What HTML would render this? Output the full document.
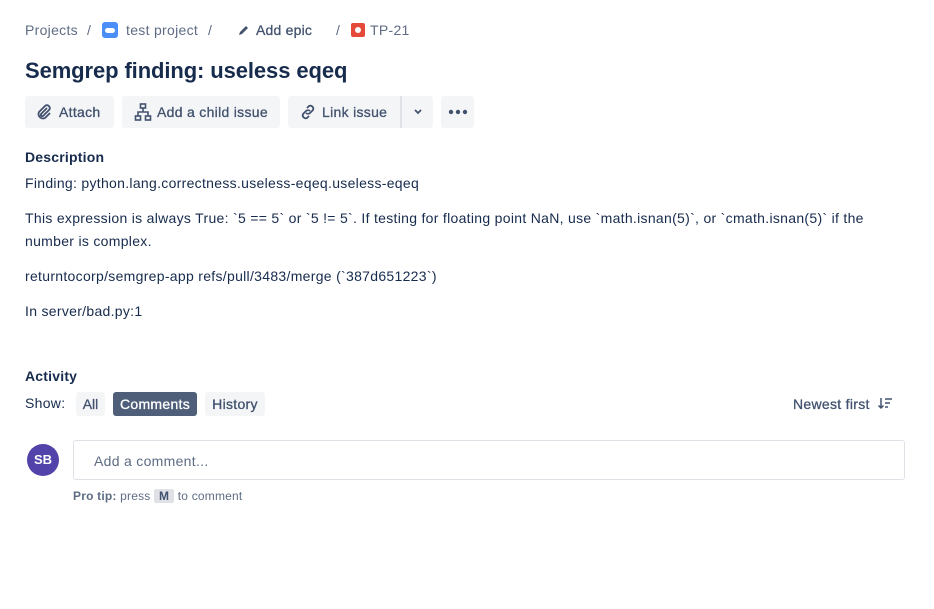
<!DOCTYPE html><html><head><meta charset="utf-8"><style>
body{margin:0;background:#fff;font-family:"Liberation Sans",sans-serif;color:#172b4d;width:934px;height:609px;overflow:hidden;position:relative}
.a{position:absolute;white-space:nowrap}
.bc{top:22px;font-size:14px;color:#5e6c84;letter-spacing:0.3px}
.btn{position:absolute;top:96px;height:32px;background:#f4f5f7;border-radius:3px;font-size:14px;color:#42526e;display:flex;align-items:center;box-sizing:border-box;letter-spacing:0.3px;-webkit-text-stroke:0.3px #42526e}
.p{font-size:14px;color:#172b4d;letter-spacing:0.3px}
</style></head><body>
<div class="a bc" style="left:25px">Projects</div>
<div class="a bc" style="left:87px">/</div>
<div class="a" style="left:102px;top:22px;width:16px;height:16px;background:#4c8ef7;border-radius:3px"><div style="position:absolute;left:3px;top:6px;width:10px;height:5px;background:#fff;border-radius:3px"></div></div>
<div class="a bc" style="left:126px">test project</div>
<div class="a bc" style="left:208px">/</div>
<svg class="a" style="left:238px;top:24px" width="12" height="12" viewBox="0 0 12 12"><path d="M1 11l1-3 6-6 2 2-6 6z" fill="#42526e"/></svg>
<div class="a bc" style="left:256px;color:#42526e;-webkit-text-stroke:0.3px #42526e;letter-spacing:0.2px">Add epic</div>
<div class="a bc" style="left:336px">/</div>
<div class="a" style="left:351px;top:23px;width:14px;height:14px;background:#e5493a;border-radius:2px"><div style="position:absolute;left:4px;top:4px;width:6px;height:6px;background:#fff;border-radius:50%"></div></div>
<div class="a bc" style="left:370px">TP-21</div>
<div class="a" style="left:25px;top:58px;font-size:22px;font-weight:bold;color:#172b4d;letter-spacing:-0.1px">Semgrep finding: useless eqeq</div>
<div class="btn" style="left:25px;width:89px;padding-left:9px"><svg width="20" height="20" viewBox="0 0 20 20" style="margin-right:5px"><path d="M13 6l-6 6a1.5 1.5 0 002 2l6.5-6.5a3 3 0 00-4-4L5 10a4.5 4.5 0 006 6l5-5" stroke="#42526e" stroke-width="1.8" fill="none"/></svg>Attach</div>
<div class="btn" style="left:122px;width:158px;padding-left:11px"><svg width="20" height="20" viewBox="0 0 20 20" style="margin-right:4px"><g stroke="#42526e" stroke-width="1.6" fill="none"><rect x="7.5" y="2" width="5" height="4"/><rect x="2.5" y="14" width="5" height="4"/><rect x="12.5" y="14" width="5" height="4"/><path d="M10 6v4M5 14v-4h10v4"/></g></svg>Add a child issue</div>
<div class="btn" style="left:288px;width:145px;padding-left:10px"><svg width="20" height="20" viewBox="0 0 20 20" style="margin-right:4px"><g stroke="#42526e" stroke-width="1.8" fill="none"><path d="M9 6l2-2a3 3 0 014 4l-3 3a3 3 0 01-4 0"/><path d="M11 14l-2 2a3 3 0 01-4-4l3-3a3 3 0 014 0"/></g></svg>Link issue<div style="position:absolute;left:112px;top:0;width:2px;height:32px;background:#dfe1e6"></div><svg style="position:absolute;left:125px;top:12px" width="10" height="8" viewBox="0 0 10 8"><path d="M2 2l3 3 3-3" stroke="#42526e" stroke-width="1.8" fill="none"/></svg></div>
<div class="btn" style="left:441px;width:33px;justify-content:center"><svg width="20" height="6" viewBox="0 0 20 6"><circle cx="3" cy="3" r="2.2" fill="#42526e"/><circle cx="10" cy="3" r="2.2" fill="#42526e"/><circle cx="17" cy="3" r="2.2" fill="#42526e"/></svg></div>
<div class="a" style="left:25px;top:149px;font-size:14px;font-weight:bold;letter-spacing:0.2px">Description</div>
<div class="a p" style="left:25px;top:175px">Finding: python.lang.correctness.useless-eqeq.useless-eqeq</div>
<div class="a p" style="left:25px;top:210px">This expression is always True: `5 == 5` or `5 != 5`. If testing for floating point NaN, use `math.isnan(5)`, or `cmath.isnan(5)` if the</div>
<div class="a p" style="left:25px;top:233px">number is complex.</div>
<div class="a p" style="left:25px;top:268px">returntocorp/semgrep-app refs/pull/3483/merge (`387d651223`)</div>
<div class="a p" style="left:25px;top:303px">In server/bad.py:1</div>
<div class="a" style="left:25px;top:368px;font-size:14px;font-weight:bold;letter-spacing:0.2px">Activity</div>
<div class="a p" style="left:25px;top:395px">Show:</div>
<div class="a" style="left:76px;top:392px;width:29px;height:24px;background:#f4f5f7;border-radius:3px;font-size:14px;color:#42526e;text-align:center;line-height:24px;-webkit-text-stroke:0.3px #42526e">All</div>
<div class="a" style="left:113px;top:392px;width:84px;height:24px;background:#505f79;border-radius:3px;font-size:14px;color:#fff;text-align:center;line-height:24px;-webkit-text-stroke:0.3px #fff;letter-spacing:0.3px">Comments</div>
<div class="a" style="left:205px;top:392px;width:60px;height:24px;background:#f4f5f7;border-radius:3px;font-size:14px;color:#42526e;text-align:center;line-height:24px;-webkit-text-stroke:0.3px #42526e;letter-spacing:0.3px">History</div>
<div class="a" style="left:793px;top:396px;font-size:14px;color:#42526e;-webkit-text-stroke:0.3px #42526e;letter-spacing:0.3px">Newest first</div>
<svg class="a" style="left:877px;top:397px" width="16" height="14" viewBox="0 0 16 14"><g stroke="#42526e" stroke-width="1.5" fill="none"><path d="M4 1v10M1.5 8.5L4 11l2.5-2.5M8 2h7M8 6h5M8 10h3"/></g></svg>
<div class="a" style="left:27px;top:444px;width:32px;height:32px;border-radius:50%;background:#5243aa;color:#fff;font-size:13px;font-weight:bold;text-align:center;line-height:32px">SB</div>
<div class="a" style="left:73px;top:440px;width:832px;height:40px;border:1px solid #dfe1e6;border-radius:3px;box-sizing:border-box"></div>
<div class="a" style="left:94px;top:453px;font-size:14px;color:#5e6c84;letter-spacing:0.3px">Add a comment...</div>
<div class="a" style="left:73px;top:489px;font-size:12px;color:#5e6c84;letter-spacing:0.2px"><b>Pro tip:</b> press <span style="background:#dfe1e6;border-radius:2px;padding:0 5px;font-weight:bold;color:#42526e">M</span> to comment</div>
</body></html>
